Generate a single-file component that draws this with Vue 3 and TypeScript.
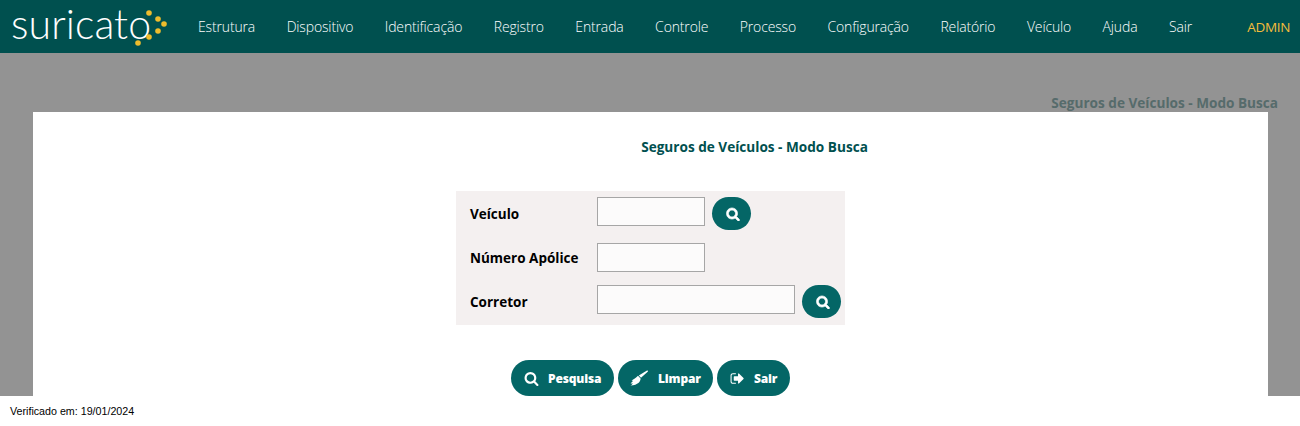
<template>
  <div class="page">
    <header class="topbar">
      <div class="logo">
        <span class="logo-text">suricato</span>
        <svg class="logo-dots" width="40" height="40" viewBox="0 0 40 40">
          <circle cx="19" cy="5" r="2.8" />
          <circle cx="28" cy="11" r="2.8" />
          <circle cx="34" cy="16" r="2.8" />
          <circle cx="28" cy="23" r="2.8" />
          <circle cx="19" cy="29" r="2.8" />
          <circle cx="8" cy="35" r="2.8" />
        </svg>
      </div>
      <nav class="menu">
        <a v-for="item in menu" :key="item">{{ item }}</a>
      </nav>
      <span class="user">ADMIN</span>
    </header>

    <main class="backdrop">
      <div class="page-title">Seguros de Veículos - Modo Busca</div>
      <section class="card">
        <h1 class="card-title">Seguros de Veículos - Modo Busca</h1>
        <form class="filters" @submit.prevent>
          <div class="row">
            <label>Veículo</label>
            <input type="text" class="short" />
            <button class="lookup" type="button" aria-label="Buscar veículo">
              <svg width="14" height="14" viewBox="0 0 1792 1792"><path :d="searchPath" /></svg>
            </button>
          </div>
          <div class="row">
            <label>Número Apólice</label>
            <input type="text" class="short" />
          </div>
          <div class="row">
            <label>Corretor</label>
            <input type="text" class="long" />
            <button class="lookup" type="button" aria-label="Buscar corretor">
              <svg width="14" height="14" viewBox="0 0 1792 1792"><path :d="searchPath" /></svg>
            </button>
          </div>
        </form>
        <div class="actions">
          <button class="action search" type="button">
            <svg width="15" height="15" viewBox="0 0 1792 1792"><path :d="searchPath" /></svg>
            Pesquisa
          </button>
          <button class="action clear" type="button">
            <svg width="18" height="16" viewBox="0 0 18 16">
              <path d="M17.4 0.2 L18 1.4 L11 7.8 L8.8 5.4 Z" />
              <path d="M8 5.8 L10.6 8.4 C10.4 11.4 8.4 14.8 0.4 15.6 C2.2 14.6 2.6 13.8 2.8 13.2 C2 13.6 1.4 13.6 0.6 13.2 C1.8 12.6 2.6 11.8 3 10.8 C2.6 10.8 2 10.8 1.6 10.4 C3.8 9.6 5.8 7.8 8 5.8 Z" />
            </svg>
            Limpar
          </button>
          <button class="action leave" type="button">
            <svg width="15" height="15" viewBox="0 0 1792 1792"><path :d="signOutPath" /></svg>
            Sair
          </button>
        </div>
      </section>
    </main>

    <footer class="footer">Verificado em: 19/01/2024</footer>
  </div>
</template>

<script setup lang="ts">
const menu: string[] = [
  'Estrutura',
  'Dispositivo',
  'Identificação',
  'Registro',
  'Entrada',
  'Controle',
  'Processo',
  'Configuração',
  'Relatório',
  'Veículo',
  'Ajuda',
  'Sair',
]

const searchPath =
  'M1216 832q0-185-131.5-316.5t-316.5-131.5-316.5 131.5-131.5 316.5 131.5 316.5 316.5 131.5 316.5-131.5 131.5-316.5zm512 832q0 52-38 90t-90 38q-54 0-90-38l-343-342q-179 124-399 124-143 0-273.5-55.5t-225-150-150-225-55.5-273.5 55.5-273.5 150-225 225-150 273.5-55.5 273.5 55.5 225 150 150 225 55.5 273.5q0 220-124 399l343 343q37 37 37 90z'
const signOutPath =
  'M704 1440q0 4 1 20t.5 26.5-3 23.5-10 19.5-20.5 6.5h-320q-119 0-203.5-84.5t-84.5-203.5v-704q0-119 84.5-203.5t203.5-84.5h320q13 0 22.5 9.5t9.5 22.5q0 4 1 20t.5 26.5-3 23.5-10 19.5-20.5 6.5h-320q-66 0-113 47t-47 113v704q0 66 47 113t113 47h312l11.5 1 11.5 3 8 5.5 7 9 2 13.5zm928-544q0 26-19 45l-544 544q-19 19-45 19t-45-19-19-45v-288h-448q-26 0-45-19t-19-45v-384q0-26 19-45t45-19h448v-288q0-26 19-45t45-19 45 19l544 544q19 19 19 45z'
</script>

<style>
html,
body {
  margin: 0;
  background: #fff;
}
</style>

<style scoped>
.page {
  width: 1300px;
  height: 426px;
  overflow: hidden;
  font-family: 'Open Sans', 'Noto Sans', sans-serif;
}

.topbar {
  display: flex;
  align-items: center;
  height: 53px;
  background: #00504f;
}

.logo {
  position: relative;
  flex: none;
  width: 198px;
  height: 53px;
  padding-left: 11px;
  box-sizing: border-box;
}

.logo-text {
  display: block;
  font-family: 'Lato', sans-serif;
  font-weight: 300;
  font-size: 41px;
  line-height: 47px;
  letter-spacing: 0.1px;
  color: #fff;
}

.logo-dots {
  position: absolute;
  left: 130px;
  top: 8px;
  fill: #eebc2c;
}

.menu {
  display: flex;
  gap: 31.5px;
}

.menu a {
  font-size: 14px;
  font-weight: 300;
  letter-spacing: -0.15px;
  color: #fff;
}

.user {
  margin-left: auto;
  margin-right: 10px;
  font-size: 13.5px;
  letter-spacing: -0.35px;
  color: #f5bd3b;
}

.backdrop {
  display: flex;
  flex-direction: column;
  height: 343px;
  padding: 0 32px 0 33px;
  box-sizing: border-box;
  background: #939393;
  overflow: hidden;
}

.page-title {
  height: 59px;
  padding-top: 41px;
  box-sizing: border-box;
  margin-right: -10px;
  text-align: right;
  font-size: 13.6px;
  line-height: 18px;
  font-weight: 700;
  color: #566b6b;
}

.card {
  flex: 1;
  display: flex;
  flex-direction: column;
  align-items: center;
  background: #fff;
}

.card-title {
  margin: 0;
  padding: 26px 0 0 208px;
  height: 79px;
  box-sizing: border-box;
  font-size: 13.6px;
  line-height: 18px;
  font-weight: 700;
  color: #00504f;
}

.filters {
  display: flex;
  flex-direction: column;
  gap: 13px;
  width: 389px;
  padding: 6px 4px 7px 14px;
  box-sizing: border-box;
  background: #f4f0f0;
}

.row {
  display: flex;
  align-items: flex-start;
}

.row label {
  width: 127px;
  flex: none;
  align-self: center;
  font-size: 13.5px;
  font-weight: 700;
  color: #000;
}

.row input {
  height: 29px;
  box-sizing: border-box;
  border: 1px solid #a6a6a6;
  background: #fcfbfb;
  padding: 0 4px;
}

.short {
  width: 108px;
}

.long {
  width: 198px;
}

.lookup {
  display: flex;
  align-items: center;
  justify-content: center;
  width: 39px;
  height: 33px;
  margin-left: 7px;
  padding: 0 0 0 2px;
  border: 0;
  border-radius: 17px;
  background: #046666;
}

.lookup svg,
.action svg {
  fill: #fff;
  flex: none;
}

.lookup svg {
  stroke: #fff;
  stroke-width: 90;
}

.actions {
  display: flex;
  gap: 4px;
  margin-top: 35px;
}

.action {
  display: flex;
  align-items: center;
  height: 36px;
  padding: 0;
  border: 0;
  border-radius: 18px;
  background: #046666;
  color: #fff;
  font-family: inherit;
  font-size: 12px;
  font-weight: 800;
  letter-spacing: -0.15px;
}

.search {
  width: 103px;
  padding-left: 13px;
  gap: 9px;
}

.clear {
  width: 95px;
  padding-left: 12px;
  gap: 10px;
}

.leave {
  width: 73px;
  padding-left: 13px;
  gap: 9px;
}

.footer {
  height: 30px;
  padding-left: 10px;
  font-family: 'Liberation Sans', Arial, sans-serif;
  font-size: 10.7px;
  line-height: 30px;
  color: #000;
}
</style>
